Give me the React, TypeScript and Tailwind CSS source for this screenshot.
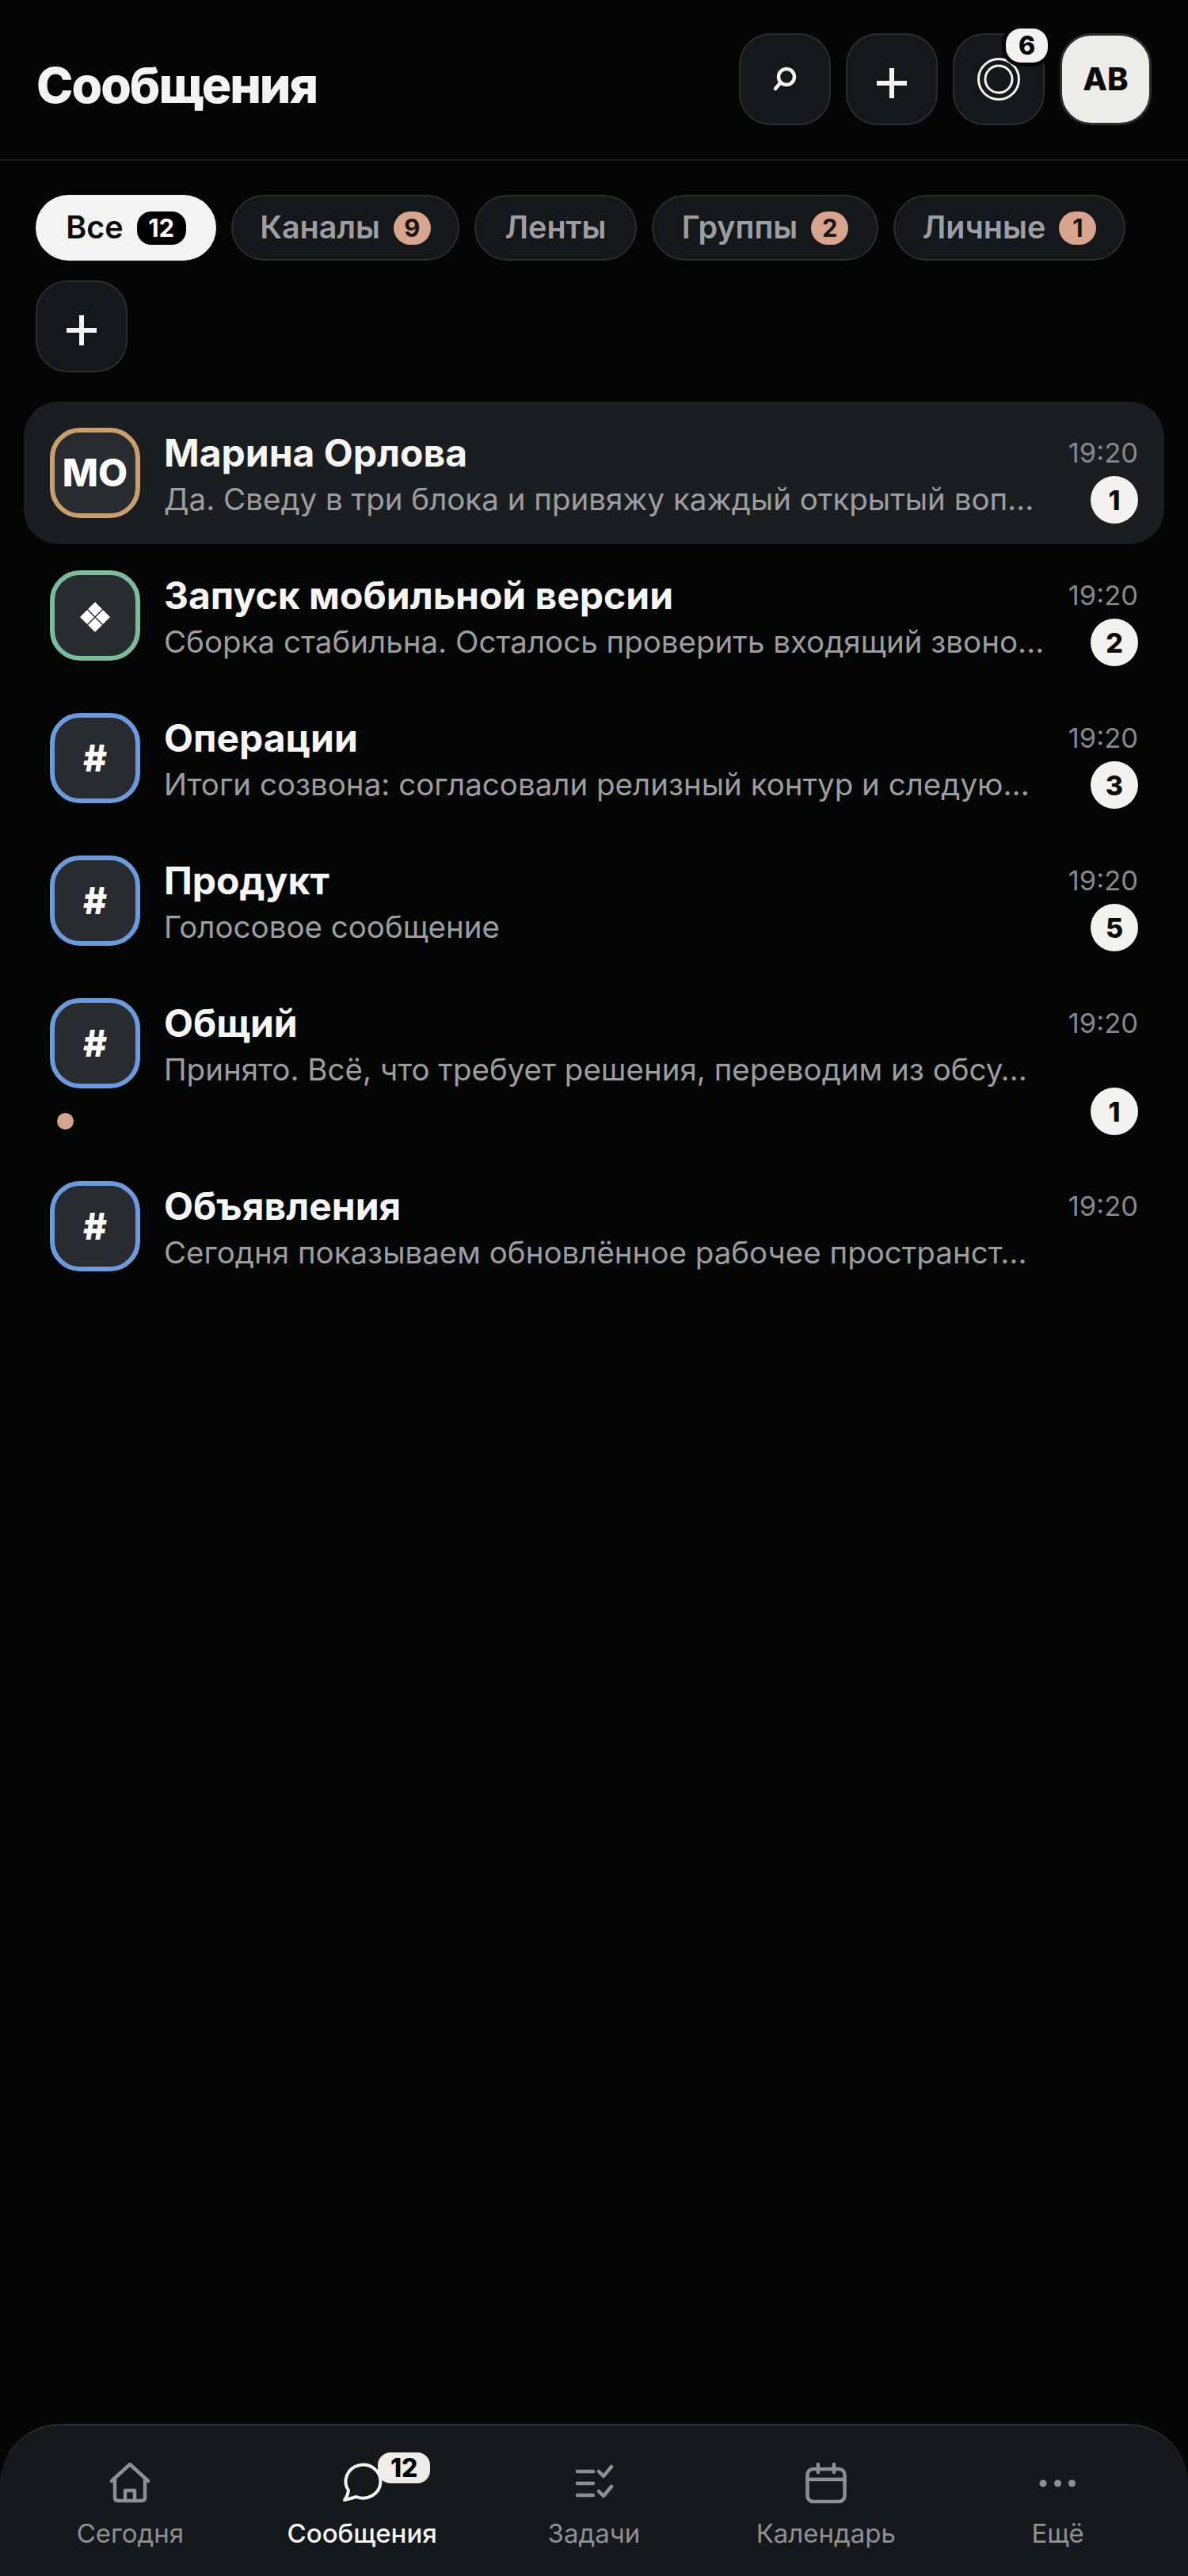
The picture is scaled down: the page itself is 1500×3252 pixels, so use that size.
const chips = [
  { label: "Все", count: "12", active: true, width: "w-[228px]" },
  { label: "Каналы", count: "9", width: "w-[288px]" },
  { label: "Ленты", width: "w-[205px]" },
  { label: "Группы", count: "2", width: "w-[286px]" },
  { label: "Личные", count: "1", width: "w-[293px]" },
];

const BLUE = "border-[#6c9bdd]";

const chats = [
  { name: "Марина Орлова", text: "Да. Сведу в три блока и привяжу каждый открытый воп…", mark: "МО", ring: "border-[#c9a06b]", unread: "1", selected: true },
  { name: "Запуск мобильной версии", text: "Сборка стабильна. Осталось проверить входящий звоно…", mark: "diamond", ring: "border-[#79bd9a]", unread: "2" },
  { name: "Операции", text: "Итоги созвона: согласовали релизный контур и следую…", mark: "#", ring: BLUE, unread: "3" },
  { name: "Продукт", text: "Голосовое сообщение", mark: "#", ring: BLUE, unread: "5" },
  { name: "Общий", text: "Принято. Всё, что требует решения, переводим из обсу…", mark: "#", ring: BLUE, unread: "1", dot: true },
  { name: "Объявления", text: "Сегодня показываем обновлённое рабочее пространст…", mark: "#", ring: BLUE },
];

const PlusIcon = () => (
  <svg width="40" height="40" viewBox="0 0 40 40" className="mt-[9px] text-[#f3f3f1]" fill="currentColor">
    <rect x="17" y="1" width="6" height="38" />
    <rect x="1" y="17" width="38" height="6" />
  </svg>
);

const DiamondIcon = () => (
  <svg width="40" height="40" viewBox="0 0 40 40" fill="#ffffff" className="mt-[3px]">
    <path d="M20 1l9 9-9 9-9-9z" />
    <path d="M10 11l9 9-9 9-9-9z" />
    <path d="M30 11l9 9-9 9-9-9z" />
    <path d="M20 21l9 9-9 9-9-9z" />
  </svg>
);

const HomeIcon = () => (
  <svg width="56" height="56" viewBox="0 0 56 56" fill="none" stroke="currentColor" strokeWidth="4.5" strokeLinecap="round" strokeLinejoin="round">
    <path d="M5 25 28 4l23 21" />
    <path d="M9 22v24q0 4 4 4h30q4 0 4-4V22" />
    <path d="M22 50V37h12v13" />
  </svg>
);

const ChatIcon = () => (
  <svg width="56" height="56" viewBox="0 0 56 56" fill="none" stroke="currentColor" strokeWidth="4" strokeLinejoin="round">
    <path d="M11 37A22 21 0 1 1 21 45Q14 47 6 49 10 44 11 37Z" />
  </svg>
);

const TasksIcon = () => (
  <svg width="56" height="56" viewBox="0 0 56 56" fill="none" stroke="currentColor" strokeWidth="4.5" strokeLinecap="round" strokeLinejoin="round">
    <path d="M7 13h20M7 28h20M7 43h20" />
    <path d="m34 13 6 6 10-12M34 38l6 6 10-12" />
  </svg>
);

const CalendarIcon = () => (
  <svg width="56" height="56" viewBox="0 0 56 56" fill="none" stroke="currentColor" strokeWidth="4.5" strokeLinecap="round">
    <rect x="4.5" y="10" width="47" height="41" rx="7" />
    <path d="M4.5 23h47M18 4v10M38 4v10" />
  </svg>
);

const MoreIcon = () => (
  <svg width="56" height="56" viewBox="0 0 56 56" fill="currentColor">
    <circle cx="9" cy="28" r="4.5" />
    <circle cx="27.5" cy="28" r="4.5" />
    <circle cx="45.5" cy="28" r="4.5" />
  </svg>
);

const tabs = [
  { label: "Сегодня", icon: <HomeIcon /> },
  { label: "Сообщения", icon: <ChatIcon />, active: true, badge: "12" },
  { label: "Задачи", icon: <TasksIcon /> },
  { label: "Календарь", icon: <CalendarIcon /> },
  { label: "Ещё", icon: <MoreIcon /> },
];

const iconButton =
  "relative flex h-[116px] w-[116px] items-center justify-center rounded-[40px] border-2 border-[#2b2d30] bg-[#15181a]";

export default function App() {
  return (
    <div className="flex h-[3252px] w-full flex-col overflow-hidden bg-[#040505] [font-family:Inter,'Noto_Sans',sans-serif] text-[#f3f3f1]">
      {/* Header */}
      <header className="flex h-[203px] shrink-0 items-start justify-between border-b-2 border-[#141618] pl-[46px] pr-[46px] pt-[42px]">
        <h1 className="mt-[30px] text-[62.5px] font-extrabold leading-[70px] tracking-[-2px]">Сообщения</h1>
        <div className="flex gap-[19px]">
          <button className={iconButton}>
            <svg width="40" height="40" viewBox="0 0 40 40" fill="none" stroke="#f3f3f1" strokeWidth="4.5" strokeLinecap="round">
              <circle cx="22" cy="17" r="10" />
              <path d="m14 25-6 7" />
            </svg>
          </button>
          <button className={iconButton}>
            <PlusIcon />
          </button>
          <button className={iconButton}>
            <svg width="58" height="58" viewBox="0 0 58 58" fill="none" stroke="#f3f3f1" strokeWidth="3">
              <circle cx="29" cy="29" r="25.5" />
              <circle cx="29" cy="29" r="17" />
            </svg>
            <span className="absolute left-[65px] top-[-8px] flex h-[43px] w-[53px] items-center justify-center rounded-[19px] bg-[#f3f2ee] text-[32px] font-extrabold text-black shadow-[0_0_0_5px_#040505]">
              6
            </span>
          </button>
          <button className="flex h-[116px] w-[116px] items-center justify-center rounded-[40px] border-[3px] border-[#2b2d30] bg-[#eeece7] text-[40px] font-extrabold text-[#0b0b0b]">
            AB
          </button>
        </div>
      </header>

      {/* Filter chips */}
      <div className="flex shrink-0 flex-wrap gap-x-[19px] gap-y-[25px] px-[45px] pt-[43px]">
        {chips.map((chip) => (
          <div
            key={chip.label}
            className={`flex h-[83px] items-center justify-center gap-[17px] rounded-full text-[39.5px] font-semibold leading-none ${chip.width} ${
              chip.active ? "bg-[#f3f3f1] text-[#0b0b0b]" : "border-2 border-[#2b2d30] bg-[#15181a] text-[#9b9ea3]"
            }`}
          >
            {chip.label}
            {chip.count && (
              <span
                className={
                  chip.active
                    ? "flex h-[42px] w-[62px] items-center justify-center rounded-[18px] bg-black text-[31px] font-bold text-white"
                    : "flex h-[42px] w-[47px] items-center justify-center rounded-full bg-[#d8a48e] text-[31px] font-bold text-[#1a1412]"
                }
              >
                {chip.count}
              </span>
            )}
          </div>
        ))}
        <button className={iconButton}>
          <PlusIcon />
        </button>
      </div>

      {/* Chat list */}
      <div className="mt-[37px] flex shrink-0 flex-col px-[30px]">
        {chats.map((chat) => (
          <div
            key={chat.name}
            className={`flex gap-[30px] pl-[33px] pr-[33px] pt-[33px] ${chat.dot ? "h-[231px]" : "h-[180px]"} ${chat.selected ? "rounded-[44px] bg-[#1b1e21]" : ""}`}
          >
            <div className="w-[114px] shrink-0">
              <div
                className={`flex h-[114px] w-[114px] items-center justify-center rounded-[38px] border-[6px] bg-[#282b2f] font-extrabold text-white ${chat.ring} ${chat.mark === "МО" ? "text-[48px]" : "text-[46px]"}`}
              >
                {chat.mark === "diamond" ? <DiamondIcon /> : chat.mark}
              </div>
              {chat.dot && <div className="ml-[9px] mt-[31px] h-[21px] w-[21px] rounded-full bg-[#d8a48e]" />}
            </div>
            <div className="min-w-0 flex-1">
              <div className="mt-[3px] whitespace-nowrap text-[48px] font-bold leading-[58px] text-[#f5f5f3]">
                {chat.name}
              </div>
              <div className="whitespace-nowrap text-[38.5px] leading-[58px] text-[#9c9d9f]">{chat.text}</div>
            </div>
            <div className="flex w-[88px] shrink-0 flex-col items-end">
              <div className="mt-[9px] h-[46px] text-[34.5px] leading-[46px] text-[#85888c]">19:20</div>
              {chat.unread && (
                <div
                  className={`flex h-[60px] w-[60px] items-center justify-center rounded-full bg-[#f3f2ee] text-[34px] font-extrabold text-[#0b0b0b] ${chat.dot ? "mt-[58px]" : "mt-[6px]"}`}
                >
                  {chat.unread}
                </div>
              )}
            </div>
          </div>
        ))}
      </div>

      {/* Bottom navigation */}
      <nav className="mt-auto grid h-[192px] shrink-0 grid-cols-5 rounded-t-[76px] border-t-2 border-[#2c2e31] bg-[#16191b] px-[18px] pt-[45px]">
        {tabs.map((tab) => (
          <div
            key={tab.label}
            className={`flex flex-col items-center ${tab.active ? "font-medium text-[#f4f4f2]" : "text-[#8d9093]"}`}
          >
            <div className="relative h-[56px] w-[56px]">
              {tab.icon}
              {tab.badge && (
                <span className="absolute left-[48px] top-[-11px] flex h-[39px] w-[66px] items-center justify-center rounded-[16px] bg-[#eeece7] text-[32px] font-extrabold text-black">
                  {tab.badge}
                </span>
              )}
            </div>
            <span className="mt-[13px] text-[33px] leading-[44px]">{tab.label}</span>
          </div>
        ))}
      </nav>
    </div>
  );
}
